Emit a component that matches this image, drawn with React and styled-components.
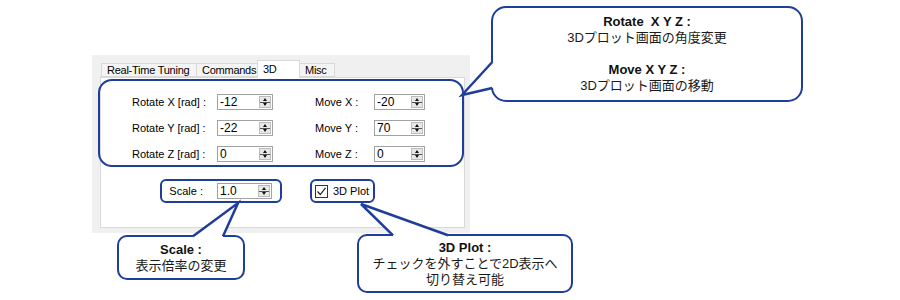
import styled, { createGlobalStyle } from 'styled-components';

const BLUE = '#1f3d9a';

const GlobalStyle = createGlobalStyle`
  html, body {
    margin: 0;
    padding: 0;
    background: #fff;
  }
  body {
    font-family: "Liberation Sans", Arial, sans-serif;
    color: #000;
  }
`;

const Canvas = styled.div`
  position: relative;
  width: 900px;
  height: 300px;
  box-sizing: border-box;
  padding: 55px 0 0 92px;
  overflow: hidden;
`;

const Dialog = styled.div`
  width: 378px;
  height: 178px;
  box-sizing: border-box;
  background: #f0f0f0;
  padding: 6px 5px 5px 8px;
  display: flex;
  flex-direction: column;
`;

const TabStrip = styled.div`
  display: flex;
  align-items: flex-end;
  height: 16px;
  padding-left: 2px;
  position: relative;
  z-index: 1;
`;

const Tab = styled.div`
  box-sizing: border-box;
  width: ${(p) => p.$w}px;
  height: ${(p) => (p.$active ? 18 : 14)}px;
  margin-bottom: ${(p) => (p.$active ? -1 : 0)}px;
  padding: ${(p) => (p.$active ? '2px 0 0 5px' : '0 0 0 5px')};
  background: ${(p) => (p.$active ? '#fff' : '#f4f4f4')};
  border: 1px solid #d9d9d9;
  border-bottom: ${(p) => (p.$active ? 'none' : '1px solid #d9d9d9')};
  margin-left: -1px;
  font-size: 11px;
  letter-spacing: -0.25px;
  line-height: 12px;
  white-space: nowrap;
  overflow: hidden;
`;

const TabPage = styled.div`
  flex: 1;
  background: #fff;
  border: 1px solid #d9d9d9;
  padding: 16px 0 0 31px;
  display: flex;
  flex-direction: column;
`;

const FieldGrid = styled.div`
  display: grid;
  grid-template-columns: 85px 56px 42px 59px 51px;
  grid-auto-rows: 16px;
  row-gap: 10px;
  align-items: center;
`;

const BottomRow = styled(FieldGrid)`
  margin-top: 21px;
`;

const Label = styled.span`
  font-size: 11px;
  line-height: 12px;
  white-space: nowrap;
  justify-self: ${(p) => (p.$end ? 'end' : 'start')};
  padding-right: ${(p) => (p.$end ? 14 : 0)}px;
`;

const SpinBox = styled.div`
  box-sizing: border-box;
  width: ${(p) => p.$w}px;
  height: 16px;
  border: 1px solid #a2a2a2;
  background: #fff;
  display: flex;
  align-items: center;
  padding: 0 1px 0 1px;
`;

const Value = styled.span`
  flex: 1;
  font-size: 12px;
  line-height: 12px;
  padding-left: 1px;
`;

const Spin = styled.div`
  box-sizing: border-box;
  width: 12px;
  height: 12px;
  border: 1px solid #bcbcbc;
  background: #e8e8e8;
  display: flex;
  flex-direction: column;
`;

const SpinHalf = styled.div`
  flex: 1;
  display: flex;
  align-items: center;
  justify-content: center;
  border-top: ${(p) => (p.$down ? '1px solid #555' : 'none')};

  &::after {
    content: '';
    border-left: 2.5px solid transparent;
    border-right: 2.5px solid transparent;
    ${(p) =>
      p.$down ? 'border-top: 3px solid #111;' : 'border-bottom: 3px solid #111;'}
  }
`;

const CheckRow = styled.label`
  display: flex;
  align-items: center;
  gap: 5px;
  font-size: 11px;
  line-height: 12px;
  white-space: nowrap;
`;

const Box = styled.span`
  box-sizing: border-box;
  width: 13px;
  height: 13px;
  border: 1px solid #333;
  background: #fff;
  display: flex;
  align-items: center;
  justify-content: center;
`;

const Frame = styled.div`
  position: absolute;
  left: ${(p) => p.$x}px;
  top: ${(p) => p.$y}px;
  width: ${(p) => p.$w}px;
  height: ${(p) => p.$h}px;
  box-sizing: border-box;
  border: 2.5px solid ${BLUE};
  border-radius: ${(p) => p.$r}px;
  pointer-events: none;
`;

const Bubble = styled(Frame)`
  background: #fff;
  display: flex;
  flex-direction: column;
  align-items: center;
  justify-content: center;
  font-family: "Liberation Sans", "Noto Sans CJK JP", sans-serif;
  font-size: 13px;
  line-height: 16px;
  color: #1a1a1a;
  text-align: center;
`;

const Title = styled.b`
  font-weight: bold;
  color: #111;
  white-space: pre;
`;

const Gap = styled.div`
  height: 16px;
`;

const Tails = styled.svg`
  position: absolute;
  left: 0;
  top: 0;
  pointer-events: none;
`;

const rows = [
  { rot: 'Rotate X [rad] :', rv: '-12', mov: 'Move X :', mv: '-20' },
  { rot: 'Rotate Y [rad] :', rv: '-22', mov: 'Move Y :', mv: '70' },
  { rot: 'Rotate Z [rad] :', rv: '0', mov: 'Move Z :', mv: '0' },
];

const tails = [
  { base: [[492.3, 62], [492.3, 88]], tip: [462, 95], cover: [[489, 62], [496, 62], [496, 88], [489, 88]] },
  { base: [[193, 236.3]], tip: [238, 203], end: [223, 236.3], cover: [[193, 233], [223, 233], [223, 239.5], [193, 239.5]] },
  { base: [[393, 235.3]], tip: [361, 204], end: [448, 235.3], cover: [[393, 232], [448, 232], [448, 238.5], [393, 238.5]] },
];

const NumberBox = ({ w, value }) => (
  <SpinBox $w={w}>
    <Value>{value}</Value>
    <Spin>
      <SpinHalf />
      <SpinHalf $down />
    </Spin>
  </SpinBox>
);

const Tail = ({ t }) => {
  const a = t.base[0];
  const b = t.end || t.base[1];
  const pts = (arr) => arr.map((p) => p.join(',')).join(' ');
  return (
    <g>
      <polygon points={pts(t.cover)} fill="#fff" />
      <polygon points={pts([a, t.tip, b])} fill="#fff" />
      <polyline
        points={pts([a, t.tip, b])}
        fill="none"
        stroke={BLUE}
        strokeWidth="2.5"
        strokeLinejoin="miter"
      />
    </g>
  );
};

const App = () => {
  return (
    <Canvas>
      <GlobalStyle />
      <Dialog>
        <TabStrip>
          <Tab $w={96}>Real-Time Tuning</Tab>
          <Tab $w={62}>Commands</Tab>
          <Tab $w={43} $active>3D</Tab>
          <Tab $w={36}>Misc</Tab>
        </TabStrip>
        <TabPage>
          <FieldGrid>
            {rows.map((r) => [
              <Label key={r.rot}>{r.rot}</Label>,
              <NumberBox key={r.rot + 'v'} w={56} value={r.rv} />,
              <span key={r.rot + 's'} />,
              <Label key={r.mov}>{r.mov}</Label>,
              <NumberBox key={r.mov + 'v'} w={51} value={r.mv} />,
            ])}
          </FieldGrid>
          <BottomRow>
            <Label $end>Scale :</Label>
            <NumberBox w={55} value="1.0" />
            <span />
            <CheckRow>
              <Box>
                <svg width="11" height="11" viewBox="0 0 11 11">
                  <path d="M1.5 5.5 L4.3 8.5 L9.5 1.8" fill="none" stroke="#222" strokeWidth="1.2" />
                </svg>
              </Box>
              3D Plot
            </CheckRow>
          </BottomRow>
        </TabPage>
      </Dialog>

      <Frame $x={98} $y={79} $w={366} $h={88} $r={14} />
      <Frame $x={160} $y={179} $w={122} $h={24} $r={6} />
      <Frame $x={310} $y={179} $w={65} $h={24} $r={6} />

      <Bubble $x={491} $y={6} $w={312} $h={96} $r={15}>
        <Title>{'Rotate  X Y Z :'}</Title>
        <span>3Dプロット画面の角度変更</span>
        <Gap />
        <Title>Move X Y Z :</Title>
        <span>3Dプロット画面の移動</span>
      </Bubble>
      <Bubble $x={117} $y={235} $w={128} $h={45} $r={10}>
        <Title>Scale :</Title>
        <span>表示倍率の変更</span>
      </Bubble>
      <Bubble $x={357} $y={234} $w={216} $h={59} $r={10}>
        <Title>3D Plot :</Title>
        <span>チェックを外すことで2D表示へ</span>
        <span>切り替え可能</span>
      </Bubble>

      <Tails width="900" height="300">
        {tails.map((t, i) => (
          <Tail key={i} t={t} />
        ))}
      </Tails>
    </Canvas>
  );
};

export default App;
